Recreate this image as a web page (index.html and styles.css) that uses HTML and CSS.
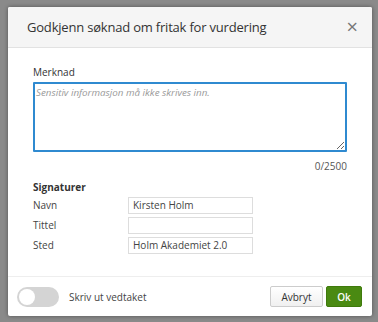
FILE: index.html
```html
<!DOCTYPE html>
<html lang="no">
<head>
<meta charset="UTF-8" />
<meta name="viewport" content="width=device-width, initial-scale=1" />
<title>Godkjenn søknad</title>
<link rel="stylesheet" href="styles.css">
</head>
<body>

<!-- Dialog -->
<div class="modal">
  <div class="modal-header">
    <h2>Godkjenn søknad om fritak for vurdering</h2>
    <span class="close-btn">&times;</span>
  </div>

  <div class="modal-body">
    <label class="field-label" for="merknad">Merknad</label>
    <textarea id="merknad" placeholder="Sensitiv informasjon må ikke skrives inn."></textarea>
    <div class="counter">0/2500</div>

    <h3>Signaturer</h3>
    <div class="sign-row">
      <span>Navn</span>
      <input type="text" value="Kirsten Holm" />
    </div>
    <div class="sign-row">
      <span>Tittel</span>
      <input type="text" value="" />
    </div>
    <div class="sign-row">
      <span>Sted</span>
      <input type="text" value="Holm Akademiet 2.0" />
    </div>
  </div>

  <div class="modal-footer">
    <span class="toggle"><span class="knob"></span></span>
    <span class="toggle-label">Skriv ut vedtaket</span>
    <div class="buttons">
      <button class="btn">Avbryt</button>
      <button class="btn btn-ok">Ok</button>
    </div>
  </div>
</div>

</body>
</html>
```

FILE: styles.css
```css
/* Reset */
* {
  margin: 0; padding: 0; box-sizing: border-box;
}
html, body {
  height: 100%;
}
body {
  font-family: "Open Sans", "Liberation Sans", sans-serif;
  font-size: 10px;
  color: #333;
  background: #8a8a8a;
  padding: 7px 6px 6px 8px;
}

/* Dialog */
.modal {
  width: 364px;
  height: 309px;
  background: #fff;
  border-radius: 2px;
  box-shadow: 0 0 4px rgba(0,0,0,0.4);
  display: flex;
  flex-direction: column;
  overflow: hidden;
}
.modal-header {
  height: 41px;
  background: #f5f5f5;
  border-bottom: 1px solid #e2e2e2;
  display: flex;
  align-items: center;
  justify-content: space-between;
  padding: 0 14px 0 19px;
}
.modal-header h2 {
  font-size: 13px;
  letter-spacing: -0.2px;
  font-weight: 400;
  color: #333;
}
.close-btn {
  font-size: 20px;
  line-height: 1;
  color: #777;
}

.modal-body {
  flex: 1;
  padding: 17px 25px 0;
}
.field-label {
  display: block;
  font-size: 10px;
  line-height: 14px;
  color: #333;
  margin-bottom: 3px;
}
textarea {
  display: block;
  width: 314px;
  height: 70px;
  border: 2px solid #2f8ad0;
  border-radius: 1px;
  padding: 2px 1px;
  font-family: inherit;
  font-size: 9.8px;
  resize: vertical;
  outline: none;
}
textarea::placeholder {
  color: #9a9a9a;
  font-style: italic;
}
.counter {
  text-align: right;
  line-height: 14px;
  color: #555;
  margin-top: 7px;
}
.modal-body h3 {
  font-size: 10px;
  line-height: 14px;
  font-weight: 700;
  color: #333;
  margin-top: 7px;
  margin-bottom: 1px;
}
.sign-row {
  display: flex;
  align-items: center;
  height: 20px;
}
.sign-row span {
  width: 95px;
  color: #444;
}
.sign-row input {
  width: 125px;
  height: 17px;
  border: 1px solid #ddd;
  padding: 0 4px;
  font-family: inherit;
  font-size: 10px;
  color: #444;
}

/* Pie */
.modal-footer {
  height: 40px;
  border-top: 1px solid #eee;
  display: flex;
  align-items: center;
  padding: 0 10px 0 9px;
}
.toggle {
  width: 42px;
  height: 20px;
  border-radius: 10px;
  background: #d4d4d4;
  padding: 2px;
  display: flex;
}
.knob {
  width: 16px;
  height: 16px;
  border-radius: 50%;
  background: #fff;
}
.toggle-label {
  color: #444;
  margin-left: 10px;
}
.buttons {
  margin-left: auto;
  display: flex;
  gap: 3px;
}
.btn {
  height: 21px;
  width: 53px;
  font-family: inherit;
  font-size: 10px;
  border: 1px solid #ccc;
  border-radius: 2px;
  background: linear-gradient(#fff, #f0f0f0);
  color: #333;
}
.btn-ok {
  width: 36px;
  border-color: #3f7a0c;
  background: #4a8a12;
  color: #fff;
  font-weight: 600;
}
```
